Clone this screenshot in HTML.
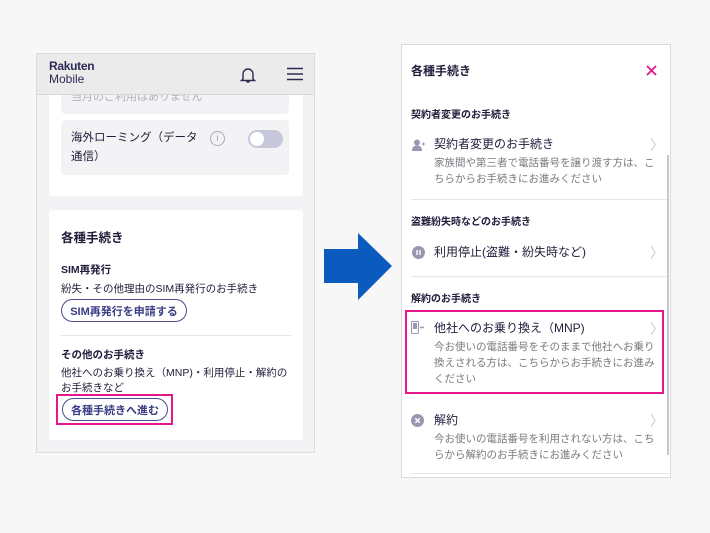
<!DOCTYPE html>
<html><head><meta charset="utf-8"><style>
*{margin:0;padding:0;box-sizing:border-box}
body{width:710px;height:533px;background:#f7f7f7;position:relative;overflow:hidden;font-family:"Liberation Sans","Noto Sans CJK JP",sans-serif;color:#1f1d3a}
.a{position:absolute}
.ph{left:36px;top:53px;width:279px;height:400px;background:#f3f3f5;border:1px solid #dcdcdc;overflow:hidden}
.hd{left:0;top:0;width:279px;height:41px;background:#ebebeb;border-bottom:1px solid #d6d6d6;z-index:5}
.card{background:#fff;border-radius:3px}
.gb{background:#f3f3f5;border-radius:4px}
.t{font-size:11px;line-height:17px;white-space:nowrap}
.b{font-weight:bold}
.btn{border:1.5px solid #4a4d8f;border-radius:14px;color:#3a3d86;font-weight:bold;font-size:11px;display:flex;align-items:center;justify-content:center;height:23px}
.rp{left:401px;top:44px;width:270px;height:434px;background:#fff;border:1px solid #dadada}
.g{color:#7a7a80;font-size:10.5px;line-height:16px;white-space:nowrap}
.hr{height:1px;background:#e6e6e6}
.chev{color:#c8c8d0;font-size:14px}
</style></head><body>
<div class="a ph">
 <div class="a card" style="left:12px;top:20px;width:254px;height:122px">
  <div class="a gb" style="left:12px;top:0;width:228px;height:40px"></div>
  <div class="a t" style="left:22px;top:15px;color:#b0b0b5">当月のご利用はありません</div>
  <div class="a gb" style="left:12px;top:46px;width:228px;height:55px"></div>
  <div class="a t" style="left:22px;top:55px;font-size:11.5px;line-height:19px">海外ローミング（データ<br>通信）</div>
  <div class="a" style="left:161px;top:57px;width:15px;height:15px;border:1px solid #a8a8c0;border-radius:50%;color:#a8a8c0;font-size:10px;text-align:center;line-height:13px">i</div>
  <div class="a" style="left:199px;top:56px;width:35px;height:18px;border-radius:9px;background:#c8c8dc"><div class="a" style="left:2px;top:2px;width:14px;height:14px;border-radius:50%;background:#fff"></div></div>
 </div>
 <div class="a hd">
  <div class="a b" style="left:12px;top:6px;font-size:12px;line-height:12px;color:#2c2a55;letter-spacing:-0.3px">Rakuten</div>
  <div class="a" style="left:12px;top:19px;font-size:12px;line-height:12px;color:#2c2a55">Mobile</div>
  <svg class="a" style="left:203px;top:12px" width="16" height="18" viewBox="0 0 16 18"><path d="M3 13V8a5 5 0 0 1 10 0v5l1.5 1.5h-13z M6.5 16h3" fill="none" stroke="#2c2a55" stroke-width="1.4"/></svg>
  <svg class="a" style="left:249px;top:13px" width="18" height="14"><path d="M1 1.5h16M1 7h16M1 12.5h16" stroke="#2c2a55" stroke-width="1.5"/></svg>
 </div>
 <div class="a card" style="left:12px;top:156px;width:254px;height:230px">
  <div class="a t b" style="left:12px;top:20px;font-size:12.5px">各種手続き</div>
  <div class="a t b" style="left:12px;top:52px;font-size:10.5px">SIM再発行</div>
  <div class="a t" style="left:12px;top:71px;font-size:10.5px">紛失・その他理由のSIM再発行のお手続き</div>
  <div class="a btn" style="left:12px;top:89px;width:126px">SIM再発行を申請する</div>
  <div class="a hr" style="left:12px;top:125px;width:230px"></div>
  <div class="a t b" style="left:12px;top:137px;font-size:10.5px">その他のお手続き</div>
  <div class="a t" style="left:12px;top:156px;font-size:10.5px;line-height:15px">他社へのお乗り換え（MNP)・利用停止・解約の<br>お手続きなど</div>
  <div class="a btn" style="left:13px;top:188px;width:106px">各種手続きへ進む</div>
  <div class="a" style="left:7px;top:184px;width:117px;height:31px;border:2.5px solid #e6168c"></div>
 </div>
</div>
<svg class="a" style="left:324px;top:233px" width="70" height="68"><path d="M0 16H34V0L68 33L34 67V50H0z" fill="#0a5bbd"/></svg>
<div class="a rp">
 <div class="a t b" style="left:9px;top:18px;font-size:12px">各種手続き</div>
 <svg class="a" style="left:244px;top:20px" width="11" height="11"><path d="M1 1l9 9M10 1l-9 9" stroke="#e6168c" stroke-width="1.8"/></svg>
 <div class="a t b" style="left:9px;top:62px;font-size:10px">契約者変更のお手続き</div>
 <svg class="a" style="left:10px;top:94px" width="14" height="12"><circle cx="5" cy="3.5" r="3" fill="#9a98b0"/><path d="M0 12c0-4 2-5.5 5-5.5s5 1.5 5 5.5z" fill="#9a98b0"/><path d="M10 5h3M11.5 3.5v3" stroke="#9a98b0"/></svg>
 <div class="a t" style="left:32px;top:91px;font-size:12px">契約者変更のお手続き</div>
 <div class="a chev" style="left:248px;top:90px">〉</div>
 <div class="a g" style="left:32px;top:110px">家族間や第三者で電話番号を譲り渡す方は、こ<br>ちらからお手続きにお進みください</div>
 <div class="a hr" style="left:9px;top:154px;width:258px"></div>
 <div class="a t b" style="left:9px;top:169px;font-size:10px">盗難紛失時などのお手続き</div>
 <svg class="a" style="left:10px;top:201px" width="13" height="13"><circle cx="6.5" cy="6.5" r="6.5" fill="#9a98b0"/><path d="M5 4v5M8 4v5" stroke="#fff" stroke-width="1.4"/></svg>
 <div class="a t" style="left:32px;top:199px;font-size:12px">利用停止(盗難・紛失時など)</div>
 <div class="a chev" style="left:248px;top:198px">〉</div>
 <div class="a hr" style="left:9px;top:231px;width:258px"></div>
 <div class="a t b" style="left:9px;top:246px;font-size:10px">解約のお手続き</div>
 <svg class="a" style="left:9px;top:276px" width="14" height="13"><rect x="0.5" y="0.5" width="7" height="12" rx="1" fill="none" stroke="#9a98b0"/><rect x="2" y="2" width="4" height="6" fill="#9a98b0"/><path d="M9 6.5h4" stroke="#9a98b0" stroke-width="1.5"/></svg>
 <div class="a t" style="left:32px;top:275px;font-size:12px">他社へのお乗り換え（MNP)</div>
 <div class="a chev" style="left:248px;top:274px">〉</div>
 <div class="a g" style="left:32px;top:294px">今お使いの電話番号をそのままで他社へお乗り<br>換えされる方は、こちらからお手続きにお進み<br>ください</div>
 <div class="a" style="left:3px;top:265px;width:259px;height:84px;border:2.5px solid #e6168c"></div>
 <svg class="a" style="left:9px;top:369px" width="13" height="13"><circle cx="6.5" cy="6.5" r="6.5" fill="#9a98b0"/><path d="M4.3 4.3l4.4 4.4M8.7 4.3l-4.4 4.4" stroke="#fff" stroke-width="1.4"/></svg>
 <div class="a t" style="left:32px;top:367px;font-size:12px">解約</div>
 <div class="a chev" style="left:248px;top:366px">〉</div>
 <div class="a g" style="left:32px;top:386px">今お使いの電話番号を利用されない方は、こち<br>らから解約のお手続きにお進みください</div>
 <div class="a hr" style="left:9px;top:428px;width:258px"></div>
 <div class="a" style="left:265px;top:110px;width:2px;height:300px;background:#c8c8c8"></div>
</div>
</body></html>
